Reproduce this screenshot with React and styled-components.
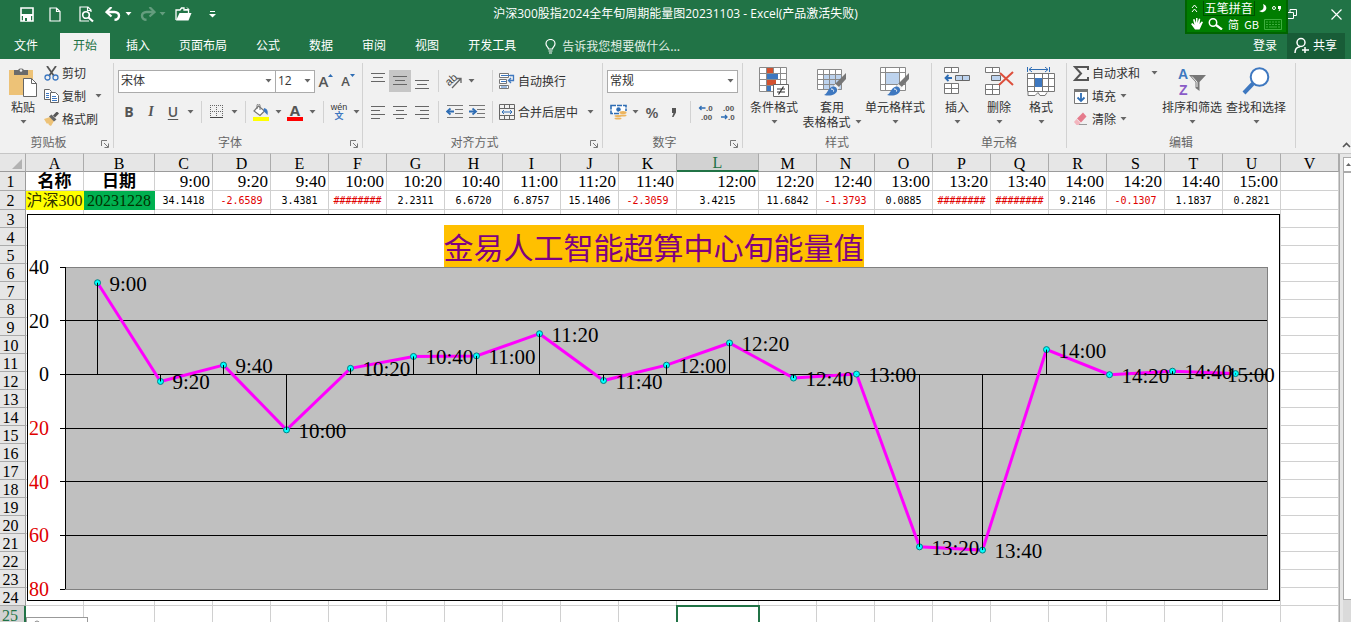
import styled, { createGlobalStyle, css } from "styled-components";

const GlobalStyle = createGlobalStyle`
  * {
    box-sizing: border-box;
  }
  body {
    margin: 0;
    background: #fff;
    overflow: hidden;
  }
  button, select {
    font: inherit;
    color: inherit;
    margin: 0;
  }
`;

const Page = styled.div`
  height: 100vh;
  display: flex;
  flex-direction: column;
  font-family: "Noto Sans CJK SC", sans-serif;
  font-size: 12px;
  line-height: 16px;
  color: #333;
`;

/* ---------- title bar ---------- */

const TopBar = styled.header`
  position: relative;
  flex: none;
  background: #217346;
  color: #fff;
`;
const TitleRow = styled.div`
  height: 33px;
  display: grid;
  grid-template-columns: 1fr auto 1fr;
  padding-bottom: 5px;
  align-items: center;
`;
const QuickAccess = styled.div`
  display: flex;
  align-items: center;
  padding-left: 16px;
`;
const QuickButton = styled.button`
  width: ${(p) => p.$w || 29}px;
  height: 24px;
  padding: 0;
  border: none;
  background: none;
  display: flex;
  align-items: center;
  justify-content: ${(p) => (p.$start ? "flex-start" : "center")};
  opacity: ${(p) => (p.$dim ? 0.3 : 1)};
`;
const DocTitle = styled.h1`
  margin: 0;
  font-family: "Open Sans", "Noto Sans CJK SC", sans-serif;
  font-size: 12px;
  font-weight: 400;
`;
const WindowButtons = styled.div`
  display: flex;
  justify-content: flex-end;
  gap: 16px;
`;

/* ---------- tabs ---------- */

const TabRow = styled.nav`
  display: flex;
  align-items: stretch;
  height: 26px;
  padding-left: 1px;
  gap: 3px;
`;
const Tab = styled.button`
  padding: 0 13px 2px;
  border: none;
  background: ${(p) => (p.$active ? "#f1f1f1" : "none")};
  color: ${(p) => (p.$active ? "#217346" : "#fff")};
`;
const FileTab = styled(Tab)`
  margin-right: 6px;
`;
const TellMe = styled.button`
  display: flex;
  align-items: center;
  gap: 6px;
  border: none;
  background: none;
  color: #e2efe7;
  padding: 0 13px;
`;
const Account = styled.div`
  margin-left: auto;
  margin-right: 6px;
  display: flex;
`;
const SignIn = styled.button`
  border: none;
  background: none;
  padding: 0 10px 2px;
`;
const Share = styled.button`
  display: flex;
  align-items: center;
  gap: 3px;
  border: none;
  background: #185c37;
  padding: 0 8px 2px 7px;
`;

/* ---------- input method bar ---------- */

const ImeBar = styled.div`
  position: absolute;
  top: 0;
  right: 63px;
  width: 103px;
  height: 34px;
  padding: 0 4px;
  border: 2px solid #006400;
  border-top: none;
  background: #007d00;
  display: flex;
  flex-direction: column;
`;
const ImeRow = styled.div`
  flex: 1;
  display: flex;
  align-items: center;
  justify-content: space-between;
`;
const ImeName = styled.span`
  padding: 0 1px;
  line-height: 14px;
  border: 1px solid #005000;
  border-top: none;
`;
const ImeMode = styled.span`
  font-size: 11px;
  line-height: 12px;
`;

/* ---------- ribbon ---------- */

const Ribbon = styled.section`
  flex: none;
  display: flex;
  height: 94px;
  background: #f1f1f1;
`;
const Group = styled.div`
  flex: none;
  width: ${(p) => p.$w}px;
  display: flex;
  flex-direction: column;
  padding-top: 3px;
  margin-bottom: 5px;
  background: linear-gradient(#d2d2d2, #d2d2d2) right 0 top 4px / 1px 100% no-repeat;
`;
const GroupBody = styled.div`
  flex: 1;
  display: flex;
  padding: 0 4px;
`;
const GroupFoot = styled.div`
  display: flex;
  align-items: center;
  height: 13px;
  padding-right: 1px;
  color: #666;
`;
const GroupName = styled.span`
  flex: 1;
  text-align: center;
`;
const Launcher = styled.button`
  width: 16px;
  height: 13px;
  padding: 5px 0 0 4px;
  border: none;
  background: none;
  display: flex;
`;
const Stack = styled.div`
  display: flex;
  flex-direction: column;
  padding-top: ${(p) => (p.$tight ? 0 : 8)}px;
  gap: ${(p) => (p.$tight ? 1 : 9)}px;
`;
const ToolRow = styled.div`
  display: flex;
  align-items: center;
  height: 22px;
`;
const Tool = styled.button`
  width: ${(p) => (p.$narrow ? 12 : 22)}px;
  height: 22px;
  padding: 0;
  border: none;
  background: ${(p) => (p.$on ? "#c6c6c6" : "none")};
  display: flex;
  align-items: center;
  justify-content: center;
`;
const Letter = styled.span`
  font-family: "Open Sans", sans-serif;
  font-size: ${(p) => p.$size || 14}px;
  font-weight: ${(p) => (p.$plain ? 600 : 700)};
  color: #555;
  ${(p) => p.$italic && css`font-family: "Liberation Serif", serif; font-style: italic;`}
  ${(p) => p.$under && css`text-decoration: underline; text-underline-offset: 2px;`}
`;
const Sep = styled.span`
  width: 10px;
  height: 22px;
  background: linear-gradient(#d2d2d2, #d2d2d2) center / 1px 100% no-repeat;
`;
const Gap = styled.span`
  width: 10px;
`;
const LabelTool = styled.button`
  display: flex;
  align-items: center;
  gap: 3px;
  height: 22px;
  padding: 0 2px;
  border: none;
  background: none;
  white-space: nowrap;
  svg:last-child:not(:first-child) {
    margin-left: ${(p) => p.$caretGap || 4}px;
  }
`;
const BigTool = styled.button`
  width: ${(p) => p.$w}px;
  padding: 3px 0 0;
  border: none;
  background: none;
  display: flex;
  flex-direction: column;
  align-items: center;
  white-space: nowrap;
  line-height: 15px;
`;
const BigIcon = styled.span`
  height: 34px;
  padding-top: 2px;
`;
const CaretLine = styled.span`
  display: flex;
  align-items: center;
  height: 15px;
  gap: 4px;
`;
const PickWrap = styled.label`
  display: flex;
  align-items: center;
  width: ${(p) => p.$w}px;
  height: 23px;
  margin-right: ${(p) => (p.$joined ? -1 : 0)}px;
  border: 1px solid #ababab;
  background: #fff;
  padding-right: 3px;
`;
const Pick = styled.select`
  flex: 1;
  min-width: 0;
  height: 21px;
  padding: 0 2px;
  border: none;
  background: none;
  appearance: none;
  outline: none;
  font-family: "Open Sans", "Noto Sans CJK SC", sans-serif;
`;
const Collapse = styled.button`
  margin-left: auto;
  align-self: flex-end;
  padding: 0 0 2px;
  border: none;
  background: none;
`;

/* ---------- sheet ---------- */

const SheetArea = styled.main`
  flex: 1;
  min-height: 0;
  display: flex;
  background: #e6e6e6;
`;
const SheetView = styled.div`
  position: relative;
  flex: 1;
  min-width: 0;
  overflow: hidden;
  background: #fff;
`;
const Grid = styled.table`
  width: 100%;
  min-width: 1339px;
  table-layout: fixed;
  border-collapse: separate;
  border-spacing: 0;
  font-family: "Liberation Serif", "Noto Sans CJK SC", serif;
  font-size: 16px;
  line-height: 17px;
  color: #000;
`;
const ColHead = styled.th`
  height: 19px;
  padding: 2px 0 0;
  line-height: 14px;
  font-weight: 400;
  background: ${(p) => (p.$on ? "#d2d2d2" : "#e6e6e6")};
  color: ${(p) => (p.$on ? "#217346" : "#000")};
  border: 1px solid #ababab;
  border-bottom: ${(p) => (p.$on ? "2px solid #217346" : "1px solid #9b9b9b")};
  border-left: none;
  border-top-color: #c6c6c6;
`;
const Corner = styled(ColHead)`
  svg {
    display: block;
    margin-left: 11px;
  }
`;
const RowHead = styled.th`
  padding: 2px 4px 0 0;
  line-height: 14px;
  font-weight: 400;
  text-align: center;
  background: ${(p) => (p.$on ? "#d2d2d2" : "#e6e6e6")};
  color: ${(p) => (p.$on ? "#217346" : "#000")};
  border-right: ${(p) => (p.$on ? "2px solid #217346" : "1px solid #9b9b9b")};
  border-bottom: 1px solid #ababab;
`;
const Row = styled.tr`
  height: ${(p) => (p.$tall ? 19 : 18)}px;
`;
const Cell = styled.td`
  padding: 0;
  border-right: 1px solid #d0d0d0;
  border-bottom: 1px solid #d0d0d0;
  white-space: nowrap;
  ${(p) => p.$on && css`outline: 2px solid #217346; outline-offset: -1px;`}
`;
const NameCell = styled(Cell)`
  font-size: 17px;
  font-weight: 700;
  text-align: center;
`;
const FillCell = styled(Cell)`
  background: ${(p) => p.$fill};
  border-color: ${(p) => p.$fill};
  color: ${(p) => p.$ink};
  text-align: center;
`;
const TimeCell = styled(Cell)`
  font-size: 17px;
  text-align: right;
  padding-right: 2px;
`;
const ValueCell = styled(Cell)`
  padding-top: 1px;
  font-family: "DejaVu Sans Mono", monospace;
  font-size: 10px;
  text-align: center;
  color: ${(p) => (p.$neg ? "#e00000" : "#000")};
`;
const ChartObject = styled.figure`
  position: absolute;
  left: 27px;
  top: 61px;
  width: 1253px;
  height: 387px;
  margin: 0;
  background: #fff;
  border: 1px solid #000;
  display: flex;
  flex-direction: column;
  align-items: center;
`;
const ChartTitle = styled.figcaption`
  margin-top: 10px;
  margin-bottom: -10px;
  font-family: "Noto Sans CJK SC", sans-serif;
  font-size: 30px;
  line-height: 42px;
  color: #800080;
  background: #ffc000;
`;
const Plot = styled.svg`
  display: block;
  font-family: "Liberation Serif", serif;
`;
const NoteObject = styled.div`
  position: absolute;
  left: 26px;
  top: 464px;
  width: 62px;
  height: 20px;
  padding: 2px 0 0 7px;
  border: 1px solid #999;
  background: #fff;
  display: flex;
`;
const ScrollBar = styled.div`
  flex: none;
  width: 12px;
  display: flex;
  flex-direction: column;
  padding: 3px 0 0 4px;
  border-top: 1px solid #c6c6c6;
  background: linear-gradient(#ababab, #ababab) left 0 top 0 / 1px 100% no-repeat, #e6e6e6;
`;
const ScrollUp = styled.button`
  height: 15px;
  padding: 4px 0 0 2px;
  border: 1px solid #ababab;
  border-right: none;
  background: #fff;
  display: flex;
  overflow: hidden;
`;
const ScrollTrack = styled.div`
  flex: 1;
  background: #dadada;
`;
const ScrollThumb = styled.div`
  height: 95%;
  border: 1px solid #ababab;
  border-right: none;
  background: #fff;
`;

/* ---------- icons ---------- */

function Svg({ w, h, children }) {
  return (
    <svg width={w} height={h} viewBox={`0 0 ${w} ${h}`} fill="none" aria-hidden="true">
      {children}
    </svg>
  );
}

const Caret = ({ color = "#666" }) => (
  <Svg w={7} h={4}>
    <path d="M.5 0h6l-3 3.5z" fill={color} />
  </Svg>
);

const SaveIcon = () => (
  <Svg w={14} h={15}>
    <path d="M1 1h12v13H1z" stroke="#fff" strokeWidth="1.6" />
    <path d="M1 7h12v2H1zM3 9h8v5H3z" fill="#fff" />
    <path d="M5 11h2v3H5z" fill="#217346" />
  </Svg>
);
const NewIcon = () => (
  <Svg w={12} h={15}>
    <path d="M1 1h6.5L11 4.500V14H1zM7.500 1v3.500H11" stroke="#fff" strokeWidth="1.2" />
  </Svg>
);
const PreviewIcon = () => (
  <Svg w={15} h={17}>
    <path d="M12 6V4L9 1H1v14h9M8.500 1v3.500H12" stroke="#fff" strokeWidth="1.2" />
    <circle cx="7" cy="9" r="3.3" stroke="#fff" strokeWidth="1.6" />
    <path d="M9.500 11.500l4.500 4" stroke="#fff" strokeWidth="2.2" />
  </Svg>
);
const UndoIcon = ({ flip }) => (
  <Svg w={16} h={14}>
    <g transform={flip ? "translate(16 0) scale(-1 1)" : undefined}>
      <path d="M2 5h7.500c3 0 4.500 2 4.500 3.800 0 2-1.500 4-4.500 4" stroke="#fff" strokeWidth="2.4" />
      <path d="M6.500 0L1.500 5l5 4.500" stroke="#fff" strokeWidth="2.2" />
    </g>
  </Svg>
);
const OpenIcon = () => (
  <Svg w={17} h={14}>
    <path d="M1 13V3h4l1.500-2H9v2h4.500v3" stroke="#fff" strokeWidth="1.3" />
    <path d="M1 13.500L4.500 6h12l-3 7.500z" fill="#fff" />
    <path d="M10 2.500h3.500M12 .5l2 2" stroke="#fff" />
  </Svg>
);
const MoreIcon = () => (
  <Svg w={7} h={7}>
    <path d="M1 .5h5" stroke="#fff" />
    <path d="M0 3h7L3.500 6.500z" fill="#fff" />
  </Svg>
);
const RestoreIcon = () => (
  <Svg w={10} h={10}>
    <path d="M.5 3.500h6v6h-6zM3 3V.5h6.500v6H7" stroke="#fff" />
  </Svg>
);
const CloseIcon = () => (
  <Svg w={11} h={11}>
    <path d="M.5.5l10 10M10.500.5l-10 10" stroke="#fff" strokeWidth="1.2" />
  </Svg>
);
const BulbIcon = () => (
  <Svg w={11} h={15}>
    <path d="M3.500 10C3.500 8 1 7.500 1 4.800a4.500 4.300 0 0 1 9 0C10 7.500 7.500 8 7.500 10zM3.500 12h4M4 14h3" stroke="#fff" strokeWidth="1.2" />
  </Svg>
);
const PersonIcon = () => (
  <Svg w={16} h={17}>
    <circle cx="7" cy="5.5" r="4" stroke="#fff" strokeWidth="1.5" />
    <path d="M1 16c0-4 2-6 5-6.300M11 10v6M8 13h7" stroke="#fff" strokeWidth="1.5" />
  </Svg>
);
const ChevronsIcon = () => (
  <Svg w={7} h={9}>
    <path d="M1 4l2.500-3L6 4M1 8l2.500-3L6 8" stroke="#fff" />
  </Svg>
);
const MoonIcon = () => (
  <Svg w={8} h={9}>
    <path d="M4 0c3.500 1 4.500 4.500 2 7C4.500 8.500 2 8.500 0 7c4 0 5.500-3 4-7z" fill="#fff" />
  </Svg>
);
const DotCommaIcon = () => (
  <Svg w={10} h={7}>
    <circle cx="2" cy="3" r="1.5" stroke="#fff" />
    <path d="M6 1h3v2.500L7.500 6h-1l1-2H6z" fill="#fff" />
  </Svg>
);
const HandIcon = () => (
  <Svg w={12} h={12}>
    <path d="M4 11.500L0 6l1.500-1 2 2L2 1.500 3.500 1 5 5V0h1.500v5L8 .5l1.300.5-.8 5 2-2.500 1.500.5-2.500 5.500-1 2z" fill="#fff" />
  </Svg>
);
const GlassIcon = () => (
  <Svg w={15} h={12}>
    <circle cx="5" cy="4.5" r="3.7" stroke="#fff" strokeWidth="1.5" />
    <path d="M8 7l6 4.500" stroke="#fff" strokeWidth="2.2" />
  </Svg>
);
const KeyboardIcon = () => (
  <Svg w={18} h={11}>
    <path d="M.5.5h17v10H.5z" stroke="#3fae3f" />
    <path d="M2 3h14M2 5.500h14" stroke="#3fae3f" strokeDasharray="2 1" />
    <path d="M2 8h2M5 8h8M14 8h2" stroke="#3fae3f" />
  </Svg>
);
const LauncherIcon = () => (
  <Svg w={8} h={8}>
    <path d="M.5 6V.5H6M3 3l4 4M7.500 3.500v4h-4" stroke="#777" />
  </Svg>
);

const PasteIcon = () => (
  <Svg w={30} h={31}>
    <path d="M1 3h24v25H1z" fill="#edc277" />
    <path d="M6 3h4a3.500 3 0 0 1 6 0h4v5H6z" fill="#6b6b6b" />
    <circle cx="13" cy="3.5" r="1.3" fill="#f1f1f1" />
    <path d="M15.500 11.500h8l5 5v13h-13z" fill="#fff" stroke="#666" />
    <path d="M23.500 11.500v5h5" stroke="#666" />
  </Svg>
);
const CutIcon = () => (
  <Svg w={15} h={15}>
    <path d="M3 0l7 10M12 0L5 10" stroke="#555" strokeWidth="1.8" />
    <circle cx="3.5" cy="11.5" r="2.5" stroke="#3e78c0" strokeWidth="1.3" />
    <circle cx="11.5" cy="11.5" r="2.5" stroke="#3e78c0" strokeWidth="1.3" />
  </Svg>
);
const CopyIcon = () => (
  <Svg w={15} h={14}>
    <path d="M.5.5h5l2 2v8h-7z" fill="#fff" stroke="#666" />
    <path d="M2 4.500h3M2 6.500h3M2 8.500h3" stroke="#3e78c0" />
    <path d="M6.500 3.500h5l3 3v7h-8z" fill="#fff" stroke="#666" />
    <path d="M8 7.500h4M8 9.500h5M8 11.500h5" stroke="#3e78c0" />
  </Svg>
);
const BrushIcon = () => (
  <Svg w={15} h={14}>
    <path d="M0 7l6-2 4 4-3 5-2-1-1-2-1 1z" fill="#edc277" />
    <path d="M5 4.500l2.500-2 5 5-2.500 2z" fill="#666" />
    <path d="M10 4.500L14 .5" stroke="#555" strokeWidth="3" />
  </Svg>
);
const BorderIcon = () => (
  <Svg w={14} h={14}>
    <path d="M.5 0v13M6.500 0v13M12.500 0v13M0 .5h13M0 6.500h13" stroke="#666" strokeDasharray="1 1" />
    <path d="M0 12.500h13" stroke="#444" />
  </Svg>
);
const BucketIcon = () => (
  <Svg w={18} h={17}>
    <path d="M6.500 2l6 5L8 11.500 2 7z" fill="#fff" stroke="#777" strokeWidth="1.2" />
    <path d="M5 5V1.500a1.500 1.500 0 0 1 3 0V6" stroke="#777" />
    <path d="M12 4c4 1 4 4 3.500 7l-4-4z" fill="#3e78c0" />
    <path d="M1 13h16v4H1z" fill="#ff0" />
  </Svg>
);
const FontColor = styled.span`
  width: 16px;
  border-bottom: 4px solid #f00;
  line-height: 13px;
  text-align: center;
`;
const Pinyin = styled.span`
  display: flex;
  flex-direction: column;
  align-items: center;
  font-family: "Liberation Sans", "Noto Sans CJK SC", sans-serif;
  font-size: 9px;
  line-height: 9px;
  b {
    color: #3e78c0;
    font-weight: 700;
  }
`;
const LinesIcon = ({ kind }) => {
  const rows = {
    top: ["M1 .5h14", "M3 4.500h10", "M1 8.500h14"],
    middle: ["M1 3.500h14", "M3 7.500h10", "M1 11.500h14"],
    bottom: ["M1 7.500h14", "M3 11.500h10", "M1 15.500h14"],
    left: ["M1 2.500h14", "M1 6.500h9", "M1 10.500h14", "M1 14.500h9"],
    center: ["M1 2.500h14", "M4 6.500h8", "M1 10.500h14", "M4 14.500h8"],
    right: ["M1 2.500h14", "M6 6.500h9", "M1 10.500h14", "M6 14.500h9"],
  };
  return (
    <Svg w={16} h={16}>
      {rows[kind].map((d) => (
        <path key={d} d={d} stroke="#666" />
      ))}
    </Svg>
  );
};
const IndentIcon = ({ out }) => (
  <Svg w={17} h={14}>
    <path d="M1 .5h16M9 4.500h8M9 8.500h8M1 12.500h16" stroke="#777" />
    <g transform={out ? undefined : "translate(9 0) scale(-1 1)"}>
      <path d="M2 6.500h6" stroke="#2e6db4" strokeWidth="2" />
      <path d="M4.500 3.500l-3.500 3 3.500 3" stroke="#2e6db4" strokeWidth="1.8" />
    </g>
  </Svg>
);
const OrientIcon = () => (
  <Svg w={20} h={20}>
    <text x="2" y="12" fontSize="11" fontFamily="Liberation Sans" fill="#444" transform="rotate(-42 8 10)">ab</text>
    <path d="M8 17l8.500-9M17 12V7.500h-4.500" stroke="#666" strokeWidth="1.3" />
  </Svg>
);
const WrapIcon = () => (
  <Svg w={16} h={16}>
    <path d="M.5.5h9v4h-9zM.5 6.500h7v4h-7zM.5 12.500h9v3h-9z" stroke="#777" fill="#fff" />
    <path d="M2 2.500h9M2 8.500h5M2 14h6" stroke="#3e78c0" />
    <path d="M11 2.500h3.500v5H10M12 5L9.500 7.500 12 10" stroke="#3e78c0" strokeWidth="1.3" />
  </Svg>
);
const MergeIcon = () => (
  <Svg w={16} h={16}>
    <path d="M.5.5h15v15H.5zM.5 4.500h15M.5 11.500h15M5.500.5v4M10.500.5v4M5.500 11.500v4M10.500 11.500v4" stroke="#666" />
    <path d="M3 8h10M5 6L3 8l2 2M11 6l2 2-2 2" stroke="#2e6db4" />
  </Svg>
);
const MoneyIcon = () => (
  <Svg w={17} h={16}>
    <path d="M1 1.500h15v8H1z" fill="#fff" stroke="#2e6db4" strokeWidth="1.6" strokeDasharray="5 1" />
    <circle cx="8.5" cy="5.5" r="2.2" fill="#2e6db4" />
    <path d="M9 7h8v6H9zM4 11h8v5H4z" fill="#f1f1f1" />
    <ellipse cx="13" cy="8.5" rx="3.5" ry="1.5" fill="#edb55f" />
    <ellipse cx="13" cy="11.5" rx="3.5" ry="1" fill="#edb55f" />
    <ellipse cx="8" cy="12" rx="3.5" ry="1" fill="#edb55f" />
    <ellipse cx="8" cy="14.5" rx="3.5" ry="1" fill="#edb55f" />
  </Svg>
);
const DecimalIcon = ({ less }) => (
  <Svg w={20} h={18}>
    <g fontFamily="Liberation Sans" fontSize="8" fontWeight="700" fill="#555">
      <text x={less ? 5 : 10} y="8">{less ? ".00" : ".0"}</text>
      <text x={less ? 10 : 5} y="17">{less ? ".0" : ".00"}</text>
    </g>
    {less ? (
      <path d="M3 14h6M7 12l2 2-2 2" stroke="#2e6db4" strokeWidth="1.3" />
    ) : (
      <path d="M3.500 5h6M5.500 3l-2 2 2 2" stroke="#2e6db4" strokeWidth="1.3" />
    )}
  </Svg>
);
const ConditionalIcon = () => (
  <Svg w={30} h={31}>
    <path d="M.5.5h27v24H.5z" fill="#fff" />
    <path d="M.5.5h27v24H.5zM.5 6.500h27M.5 12.500h27M.5 18.500h27M7.500.5v24M14.500.5v24M21.500.5v24" stroke="#8a8a8a" />
    <path d="M8 1h6v5H8zM8 13h9v5H8z" fill="#d35230" />
    <path d="M8 7h11v5H8zM8 19h4v5H8z" fill="#3e78c0" />
    <path d="M14.500 17.500h15v12h-15z" fill="#fff" stroke="#666" />
    <path d="M18 22h8M18 25h8M24.500 19.500l-5 8" stroke="#333" strokeWidth="1.2" />
  </Svg>
);
const BrushOver = () => (
  <>
    <path d="M29 6v6l-9 10-4-3z" fill="#777" />
    <path d="M18.500 17l4 3.500-2 2.500-4.500-4z" fill="#f1f1f1" />
    <path d="M16 19.500c3 0 4.500 2 4 4.500-1 3.500-6 5.500-13 4 4-1.500 3.500-7 9-8.500z" fill="#3e78c0" />
    <path d="M14 22c2 0 3 1 2.500 2.500" stroke="#fff" />
  </>
);
const TableStyleIcon = () => (
  <Svg w={30} h={31}>
    <path d="M.5 2.500h24v20H.5z" fill="#fff" />
    <path d="M7 8h18v15H7z" fill="#bdd3ee" />
    <path d="M.5 2.500h24v20H.5zM.5 7.500h24M.5 12.500h24M.5 17.500h24M6.500 2.500v20M12.500 2.500v20M18.500 2.500v20" stroke="#8a8a8a" />
    <BrushOver />
  </Svg>
);
const CellStyleIcon = () => (
  <Svg w={30} h={31}>
    <path d="M.5.5h25v23H.5z" fill="#fff" stroke="#8a8a8a" />
    <path d="M.5 5.500h25M.5 17.500h25M5.500.5v23M19.500.5v23" stroke="#8a8a8a" />
    <path d="M6 6h13v11H6z" fill="#bdd3ee" />
    <BrushOver />
  </Svg>
);
const InsertIcon = () => (
  <Svg w={28} h={29}>
    <path d="M1.500.5h14v5h-14zM8.500.5v5M1.500 16.500h14v10h-14zM1.500 21.500h14M8.500 16.500v10" fill="#fff" stroke="#777" />
    <path d="M12.500 8.500h14v5h-14zM19.500 8.500v5" fill="#bdd3ee" stroke="#666" />
    <path d="M3 11h6M5.500 8l-3 3 3 3" stroke="#2e6db4" strokeWidth="1.8" />
  </Svg>
);
const DeleteIcon = () => (
  <Svg w={30} h={29}>
    <path d="M1.500.5h14v5h-14zM8.500.5v5M1.500 17.500h14v10h-14zM1.500 22.500h14M8.500 17.500v10" fill="#fff" stroke="#777" />
    <path d="M7.500 8.500h9v5h-9z" fill="#bdd3ee" stroke="#666" />
    <path d="M16 6l13 12M29 5L15 18" stroke="#dd4f3c" strokeWidth="2" />
  </Svg>
);
const FormatIcon = () => (
  <Svg w={28} h={31}>
    <path d="M.5 0v5M22.500 0v5M2 2.500h19M5 0L2 2.500 5 5M18 0l3 2.500L18 5" stroke="#2e6db4" />
    <path d="M.5 6.500h27v18H.5z" fill="#fff" />
    <path d="M.5 6.500h27v18H.5zM.5 11.500h27M.5 19.500h27M7.500 6.500v18M15.500 6.500v18M21.500 6.500v18" stroke="#777" />
    <path d="M8 11h7v9H8z" fill="#3e78c0" />
    <path d="M1 25v3.500h7l3-3 2 3h5l2-3" stroke="#777" fill="#fff" />
  </Svg>
);
const SumIcon = () => (
  <Svg w={16} h={15}>
    <path d="M15 4V1H2l6 6.500L2 14h13v-3" stroke="#555" strokeWidth="2" />
  </Svg>
);
const FillIcon = () => (
  <Svg w={16} h={16}>
    <path d="M1.500 1.500h13v14h-13z" fill="#fff" stroke="#777" />
    <path d="M1 1h14v3H1z" fill="#777" />
    <path d="M8 5v8M4.500 9.500L8 13l3.500-3.500" stroke="#2e6db4" strokeWidth="1.8" />
  </Svg>
);
const EraserIcon = () => (
  <Svg w={16} h={14}>
    <path d="M4 6.500L10 .5l3.500 4L8 10.500z" fill="#e57b8c" />
    <path d="M3.500 7l4 4L6 13H3.500L1 10z" fill="#f3b5be" />
    <path d="M6 12.500h8" stroke="#999" />
  </Svg>
);
const SortIcon = () => (
  <Svg w={30} h={31}>
    <g fontFamily="Liberation Sans" fontSize="14" fontWeight="700">
      <text x="1" y="12" fill="#3e78c0">A</text>
      <text x="2" y="28" fill="#8a5bc7">Z</text>
    </g>
    <path d="M12 8h17l-6.500 7v9l-4-3v-6z" fill="#777" />
    <path d="M15 9.500l5 5.500v5" stroke="#f1f1f1" />
  </Svg>
);
const FindIcon = () => (
  <Svg w={28} h={29}>
    <circle cx="17.5" cy="10" r="8.8" fill="#fff" stroke="#3e78c0" strokeWidth="2" />
    <path d="M11 16.500L2 26" stroke="#3e78c0" strokeWidth="4" />
  </Svg>
);

/* ---------- data ---------- */

const tabs = ["插入", "页面布局", "公式", "数据", "审阅", "视图", "开发工具"];

// cells too narrow for their number show hashes, "value" is what the chart plots
const points = [
  { time: "9:00", cell: "34.1418", value: 34.1418 },
  { time: "9:20", cell: "-2.6589", value: -2.6589 },
  { time: "9:40", cell: "3.4381", value: 3.4381 },
  { time: "10:00", cell: "########", value: -20.7 },
  { time: "10:20", cell: "2.2311", value: 2.2311 },
  { time: "10:40", cell: "6.6720", value: 6.672 },
  { time: "11:00", cell: "6.8757", value: 6.8757 },
  { time: "11:20", cell: "15.1406", value: 15.1406 },
  { time: "11:40", cell: "-2.3059", value: -2.3059 },
  { time: "12:00", cell: "3.4215", value: 3.4215 },
  { time: "12:20", cell: "11.6842", value: 11.6842 },
  { time: "12:40", cell: "-1.3793", value: -1.3793 },
  { time: "13:00", cell: "0.0885", value: 0.0885 },
  { time: "13:20", cell: "########", value: -64.3 },
  { time: "13:40", cell: "########", value: -65.5 },
  { time: "14:00", cell: "9.2146", value: 9.2146 },
  { time: "14:20", cell: "-0.1307", value: -0.1307 },
  { time: "14:40", cell: "1.1837", value: 1.1837 },
  { time: "15:00", cell: "0.2821", value: 0.2821 },
];

const columns = "ABCDEFGHIJKLMNOPQRSTUV".split("");
const colWidth = { A: 58, B: 71, L: 82 };
const emptyRows = Array.from({ length: 23 }, (_, i) => i + 3);

/* ---------- chart ---------- */

const plot = { left: 37, right: 1239, top: 10, bottom: 332 };
const xOf = (i) => Math.round(plot.left + ((plot.right - plot.left) / points.length) * (i + 0.5)) + 0.5;
const yOf = (v) => plot.top + ((40 - v) * (plot.bottom - plot.top)) / 120;

function EnergyChart() {
  return (
    <ChartObject>
      <ChartTitle>金易人工智能超算中心旬能量值</ChartTitle>
      <Plot width="1251" height="343" viewBox="0 0 1251 343" role="img" aria-label="旬能量值">
        <rect x={plot.left + 0.5} y={plot.top + 0.5} width={plot.right - plot.left} height={plot.bottom - plot.top} fill="#c0c0c0" stroke="#808080" />
        {[40, 20, 0, -20, -40, -60, -80].map((v) => (
          <g key={v}>
            {v < 40 && v > -80 && (
              <path d={`M${plot.left} ${Math.floor(yOf(v)) + 0.5}H${plot.right}`} stroke="#000" />
            )}
            <path d={`M${plot.left - 5} ${Math.floor(yOf(v)) + 0.5}h5`} stroke="#000" />
            <text x={v === 0 ? 11 : 1} y={yOf(v) + 7} fontSize="20" fill={v < 0 ? "#e00000" : "#000"}>
              {Math.abs(v)}
            </text>
          </g>
        ))}
        <path d={`M${plot.left + 0.5} ${plot.top}V${plot.bottom}`} stroke="#000" />
        <polyline
          points={points.map((p, i) => `${xOf(i)},${yOf(p.value)}`).join(" ")}
          fill="none"
          stroke="#f0f"
          strokeWidth="3"
        />
        {points.map((p, i) => (
          <circle key={p.time} cx={xOf(i)} cy={yOf(p.value)} r="3" fill="#0ff" stroke="#008080" />
        ))}
        {points.map((p, i) => (
          <g key={p.time}>
            <path d={`M${xOf(i)} ${yOf(0)}V${yOf(p.value)}`} stroke="#000" />
            <text x={Math.min(xOf(i) + 12, 1199)} y={yOf(p.value) + 8} fontSize="21">
              {p.time}
            </text>
          </g>
        ))}
      </Plot>
    </ChartObject>
  );
}

function Sheet() {
  return (
    <Grid>
      <colgroup>
        <col style={{ width: 26 }} />
        {columns.map((c) => (
          <col key={c} style={{ width: c === "V" ? "auto" : colWidth[c] || 58 }} />
        ))}
      </colgroup>
      <thead>
        <tr>
          <Corner aria-label="全选">
            <Svg w={12} h={12}>
              <path d="M11 1v10H1z" fill="#b2b2b2" />
            </Svg>
          </Corner>
          {columns.map((c) => (
            <ColHead key={c} $on={c === "L"}>{c}</ColHead>
          ))}
        </tr>
      </thead>
      <tbody>
        <Row $tall>
          <RowHead>1</RowHead>
          <NameCell>名称</NameCell>
          <NameCell>日期</NameCell>
          {points.map((p) => (
            <TimeCell key={p.time}>{p.time}</TimeCell>
          ))}
          <Cell />
        </Row>
        <Row $tall>
          <RowHead>2</RowHead>
          <FillCell $fill="#ffff00" $ink="#333300">沪深300</FillCell>
          <FillCell $fill="#00b050" $ink="#003300">20231228</FillCell>
          {points.map((p) => (
            <ValueCell key={p.time} $neg={p.value < 0}>{p.cell}</ValueCell>
          ))}
          <Cell />
        </Row>
        {emptyRows.map((n) => (
          <Row key={n}>
            <RowHead $on={n === 25}>{n}</RowHead>
            {columns.map((c) => (
              <Cell key={c} $on={n === 25 && c === "L"} />
            ))}
          </Row>
        ))}
      </tbody>
    </Grid>
  );
}

/* ---------- ribbon groups ---------- */

function RibbonGroup({ name, width, launcher, children }) {
  return (
    <Group $w={width}>
      <GroupBody>{children}</GroupBody>
      <GroupFoot>
        <GroupName>{name}</GroupName>
        {launcher && (
          <Launcher aria-label={name}>
            <LauncherIcon />
          </Launcher>
        )}
      </GroupFoot>
    </Group>
  );
}

function Dropdown({ label, value, width, joined }) {
  return (
    <PickWrap $w={width} $joined={joined}>
      <Pick aria-label={label} defaultValue={value}>
        <option>{value}</option>
      </Pick>
      <Caret />
    </PickWrap>
  );
}

function CaretTool({ label }) {
  return (
    <Tool $narrow aria-label={label}>
      <Caret />
    </Tool>
  );
}

function Big({ icon, text, width, second }) {
  return (
    <BigTool $w={width}>
      <BigIcon>{icon}</BigIcon>
      <span>{text}</span>
      <CaretLine>
        {second}
        <Caret />
      </CaretLine>
    </BigTool>
  );
}

export default function App() {
  return (
    <Page>
      <GlobalStyle />
      <TopBar>
        <TitleRow>
          <QuickAccess>
            <QuickButton $w={22} aria-label="保存"><SaveIcon /></QuickButton>
            <QuickButton $w={34} aria-label="新建"><NewIcon /></QuickButton>
            <QuickButton $w={29} aria-label="打印预览"><PreviewIcon /></QuickButton>
            <QuickButton $w={24} aria-label="撤消"><UndoIcon /></QuickButton>
            <QuickButton $w={12} $start aria-label="撤消列表"><Caret color="#fff" /></QuickButton>
            <QuickButton $w={22} $dim aria-label="恢复"><UndoIcon flip /></QuickButton>
            <QuickButton $w={12} $start $dim aria-label="恢复列表"><Caret color="#fff" /></QuickButton>
            <QuickButton $w={24} aria-label="打开"><OpenIcon /></QuickButton>
            <QuickButton $w={34} aria-label="自定义快速访问工具栏"><MoreIcon /></QuickButton>
          </QuickAccess>
          <DocTitle>沪深300股指2024全年旬周期能量图20231103 - Excel(产品激活失败)</DocTitle>
          <WindowButtons>
            <QuickButton aria-label="还原"><RestoreIcon /></QuickButton>
            <QuickButton aria-label="关闭"><CloseIcon /></QuickButton>
          </WindowButtons>
        </TitleRow>
        <TabRow>
          <FileTab>文件</FileTab>
          <Tab $active>开始</Tab>
          {tabs.map((t) => (
            <Tab key={t}>{t}</Tab>
          ))}
          <TellMe>
            <BulbIcon />
            告诉我您想要做什么...
          </TellMe>
          <Account>
            <SignIn>登录</SignIn>
            <Share>
              <PersonIcon />
              共享
            </Share>
          </Account>
        </TabRow>
        <ImeBar>
          <ImeRow>
            <ChevronsIcon />
            <ImeName>五笔拼音</ImeName>
            <MoonIcon />
            <DotCommaIcon />
          </ImeRow>
          <ImeRow>
            <HandIcon />
            <GlassIcon />
            <ImeMode>简</ImeMode>
            <ImeMode>GB</ImeMode>
            <KeyboardIcon />
          </ImeRow>
        </ImeBar>
      </TopBar>

      <Ribbon>
        <RibbonGroup name="剪贴板" width={114} launcher>
          <Big width={38} icon={<PasteIcon />} text="粘贴" />
          <Stack $tight>
            <LabelTool><CutIcon />剪切</LabelTool>
            <LabelTool $caretGap={6}><CopyIcon />复制<Caret /></LabelTool>
            <LabelTool><BrushIcon />格式刷</LabelTool>
          </Stack>
        </RibbonGroup>

        <RibbonGroup name="字体" width={249} launcher>
          <Stack>
            <ToolRow>
              <Dropdown label="字体" value="宋体" width={158} joined />
              <Dropdown label="字号" value="12" width={40} />
              <Tool aria-label="增大字号">
                <Letter $size={15} $plain>A</Letter>
                <Svg w={5} h={14}><path d="M0 3h5L2.500 0z" fill="#2e6db4" /></Svg>
              </Tool>
              <Tool aria-label="减小字号">
                <Letter $size={13} $plain>A</Letter>
                <Svg w={5} h={14}><path d="M0 0h5L2.500 3z" fill="#2e6db4" /></Svg>
              </Tool>
            </ToolRow>
            <ToolRow>
              <Tool aria-label="加粗"><Letter>B</Letter></Tool>
              <Tool aria-label="倾斜"><Letter $italic>I</Letter></Tool>
              <Tool aria-label="下划线"><Letter $under $plain>U</Letter></Tool>
              <CaretTool label="下划线样式" />
              <Sep />
              <Tool aria-label="边框"><BorderIcon /></Tool>
              <CaretTool label="边框样式" />
              <Sep />
              <Tool aria-label="填充颜色"><BucketIcon /></Tool>
              <CaretTool label="更多填充颜色" />
              <Tool aria-label="字体颜色">
                <FontColor><Letter $size={15}>A</Letter></FontColor>
              </Tool>
              <CaretTool label="更多字体颜色" />
              <Sep />
              <Tool aria-label="拼音">
                <Pinyin>wén<b>文</b></Pinyin>
              </Tool>
              <CaretTool label="拼音设置" />
            </ToolRow>
          </Stack>
        </RibbonGroup>

        <RibbonGroup name="对齐方式" width={240} launcher>
          <Stack>
            <ToolRow>
              <Tool aria-label="顶端对齐"><LinesIcon kind="top" /></Tool>
              <Tool $on aria-label="垂直居中"><LinesIcon kind="middle" /></Tool>
              <Tool aria-label="底端对齐"><LinesIcon kind="bottom" /></Tool>
              <Sep />
              <Tool aria-label="方向"><OrientIcon /></Tool>
              <CaretTool label="方向选项" />
              <Gap />
              <Sep />
              <LabelTool><WrapIcon />自动换行</LabelTool>
            </ToolRow>
            <ToolRow>
              <Tool aria-label="左对齐"><LinesIcon kind="left" /></Tool>
              <Tool aria-label="居中"><LinesIcon kind="center" /></Tool>
              <Tool aria-label="右对齐"><LinesIcon kind="right" /></Tool>
              <Sep />
              <Tool aria-label="减少缩进量"><IndentIcon out /></Tool>
              <Tool aria-label="增加缩进量"><IndentIcon /></Tool>
              <Sep />
              <LabelTool $caretGap={6}><MergeIcon />合并后居中<Caret /></LabelTool>
            </ToolRow>
          </Stack>
        </RibbonGroup>

        <RibbonGroup name="数字" width={140} launcher>
          <Stack>
            <ToolRow>
              <Dropdown label="数字格式" value="常规" width={131} />
            </ToolRow>
            <ToolRow>
              <Tool aria-label="会计数字格式"><MoneyIcon /></Tool>
              <CaretTool label="货币" />
              <Tool><Letter $size={15} $plain>%</Letter></Tool>
              <Tool aria-label="千位分隔样式">
                <Svg w={6} h={9}><path d="M1 0h4v4.500L2.500 9H1l1.500-4H1z" fill="#555" /></Svg>
              </Tool>
              <Sep />
              <Tool aria-label="增加小数位数"><DecimalIcon /></Tool>
              <Tool aria-label="减少小数位数"><DecimalIcon less /></Tool>
            </ToolRow>
          </Stack>
        </RibbonGroup>

        <RibbonGroup name="样式" width={189}>
          <Big width={54} icon={<ConditionalIcon />} text="条件格式" />
          <Big width={62} icon={<TableStyleIcon />} text="套用" second="表格格式" />
          <Big width={64} icon={<CellStyleIcon />} text="单元格样式" />
        </RibbonGroup>

        <RibbonGroup name="单元格" width={135}>
          <Big width={42} icon={<InsertIcon />} text="插入" />
          <Big width={42} icon={<DeleteIcon />} text="删除" />
          <Big width={42} icon={<FormatIcon />} text="格式" />
        </RibbonGroup>

        <RibbonGroup name="编辑" width={229}>
          <Stack $tight>
            <LabelTool $caretGap={8}><SumIcon />自动求和<Caret /></LabelTool>
            <LabelTool $caretGap={1}><FillIcon />填充<Caret /></LabelTool>
            <LabelTool $caretGap={1}><EraserIcon />清除<Caret /></LabelTool>
          </Stack>
          <Big width={64} icon={<SortIcon />} text="排序和筛选" />
          <Big width={64} icon={<FindIcon />} text="查找和选择" />
        </RibbonGroup>
        <Collapse aria-label="折叠功能区">
          <Svg w={9} h={6}><path d="M1 5l3.500-3.500L8 5" stroke="#555" strokeWidth="1.6" /></Svg>
        </Collapse>
      </Ribbon>

      <SheetArea>
        <SheetView>
          <Sheet />
          <EnergyChart />
          <NoteObject>
            <Svg w={6} h={6}>
              <path d="M.5 4a2.500 3 0 0 1 5 0" stroke="#888" />
            </Svg>
          </NoteObject>
        </SheetView>
        <ScrollBar>
          <ScrollUp aria-label="向上滚动">
            <Svg w={8} h={5}><path d="M4 0l4 5H0z" fill="#666" /></Svg>
          </ScrollUp>
          <ScrollTrack>
            <ScrollThumb />
          </ScrollTrack>
        </ScrollBar>
      </SheetArea>
    </Page>
  );
}
